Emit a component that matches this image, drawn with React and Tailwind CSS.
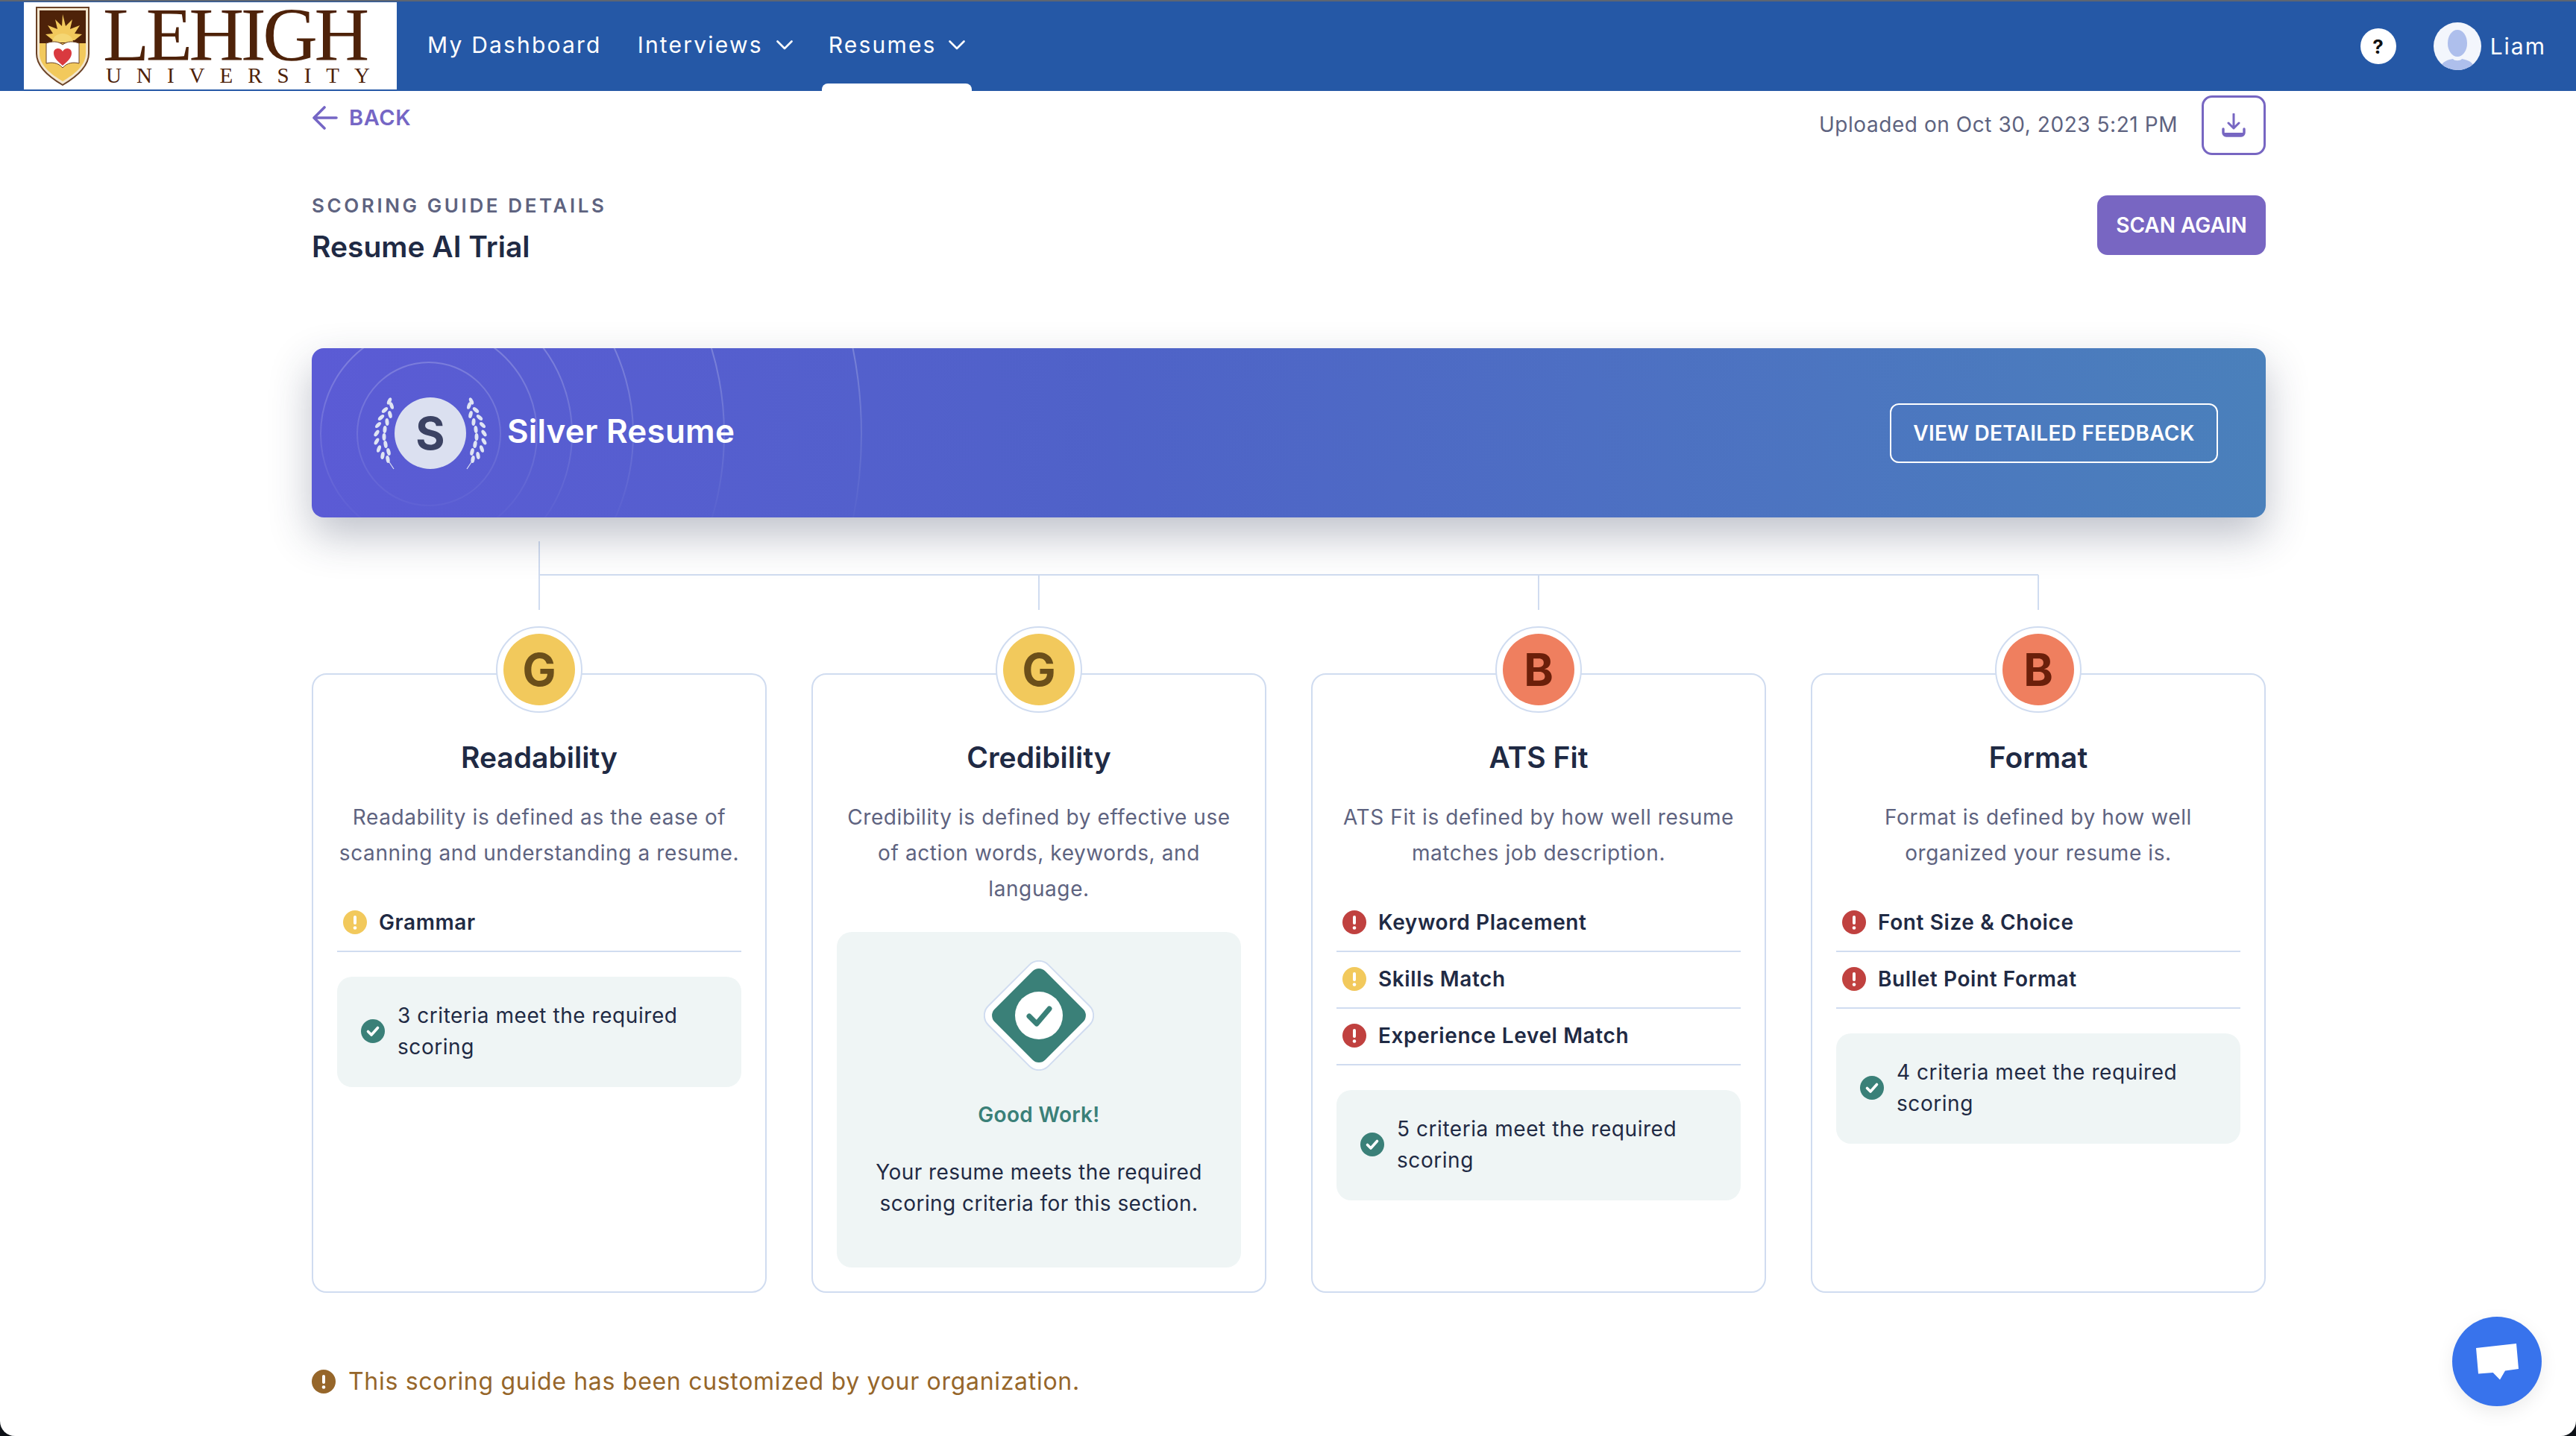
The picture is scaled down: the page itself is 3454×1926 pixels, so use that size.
const CARDS = [
  {
    grade: "G",
    title: "Readability",
    desc: ["Readability is defined as the ease of", "scanning and understanding a resume."],
    criteria: [{ label: "Grammar", level: "warn" }],
    met: 3,
  },
  {
    grade: "G",
    title: "Credibility",
    desc: ["Credibility is defined by effective use", "of action words, keywords, and", "language."],
    criteria: [],
    good: true,
  },
  {
    grade: "B",
    title: "ATS Fit",
    desc: ["ATS Fit is defined by how well resume", "matches job description."],
    criteria: [
      { label: "Keyword Placement", level: "bad" },
      { label: "Skills Match", level: "warn" },
      { label: "Experience Level Match", level: "bad" },
    ],
    met: 5,
  },
  {
    grade: "B",
    title: "Format",
    desc: ["Format is defined by how well", "organized your resume is."],
    criteria: [
      { label: "Font Size & Choice", level: "bad" },
      { label: "Bullet Point Format", level: "bad" },
    ],
    met: 4,
  },
];

function AlertDot({ color }) {
  return (
    <svg width="32" height="32" viewBox="0 0 32 32" className="shrink-0">
      <circle cx="16" cy="16" r="16" fill={color} />
      <rect x="14" y="7" width="4" height="12" rx="2" fill="#fff" />
      <circle cx="16" cy="23.5" r="2.3" fill="#fff" />
    </svg>
  );
}

function CheckDot() {
  return (
    <svg width="32" height="32" viewBox="0 0 32 32" className="shrink-0">
      <circle cx="16" cy="16" r="16" fill="#3a8078" />
      <path d="M9.500 16.500l4.500 4.500 8.500-9.500" fill="none" stroke="#fff" strokeWidth="3.600" strokeLinecap="round" strokeLinejoin="round" />
    </svg>
  );
}

function Chevron() {
  return (
    <svg width="22" height="13" viewBox="0 0 22 13" fill="none" className="shrink-0">
      <path d="M1.500 1.500L11 11l9.500-9.500" stroke="#fff" strokeWidth="2.600" strokeLinecap="round" strokeLinejoin="round" />
    </svg>
  );
}

function Crest() {
  return (
    <svg width="72" height="106" viewBox="0 0 72 106" className="shrink-0">
      <path d="M1 1h70v62c0 18-18 32-35 42C19 95 1 81 1 63z" fill="#f3e7cf" stroke="#6b4226" strokeWidth="2" />
      <path d="M5 5h62v44H5z" fill="#4e2209" />
      <path d="M5 49h62v14c0 16-16 28-31 37C21 91 5 79 5 63z" fill="#f2c95c" />
      <path d="M36 10l4 16 9-9-3 13 13-5-7 11 10 1-10 8H23L13 37l10-1-7-11 13 5-3-13 9 9z" fill="#f2c95c" />
      <path d="M22 48a14 12 0 0 1 28 0z" fill="#f5d774" />
      <path d="M14 49c8-3 16-3 22 2 6-5 14-5 22-2v27c-8-2-16-1-22 6-6-7-14-8-22-6z" fill="#fff" stroke="#6b4226" strokeWidth="1" />
      <path d="M36 79c-8-7-12-11-12-17 0-7 9-8 12-2 3-6 12-5 12 2 0 6-4 10-12 17z" fill="#d93a3f" />
    </svg>
  );
}

function Laurel({ flip }) {
  // leaf pairs running up the branch
  const leaves = [
    [20, 84, 30], [13, 79, 10], [21, 74, 35], [8, 70, 0], [17, 64, 30], [5, 60, -10], [15, 54, 20],
    [5, 49, -15], [16, 44, 15], [7, 38, -25], [19, 34, 25], [11, 28, -30], [23, 24, 35], [16, 18, -30], [25, 12, 40], [22, 6, -5],
  ];
  return (
    <svg width="30" height="98" viewBox="0 0 30 98" className={flip ? "shrink-0 -scale-x-100" : "shrink-0"}>
      <path d="M28 97L18 82" stroke="#dfe4f3" strokeWidth="1.200" fill="none" />
      {leaves.map(([x, y, r], i) => (
        <ellipse key={i} cx={x} cy={y} rx="2.500" ry="5" fill="#dfe4f3" transform={`rotate(${-r + 20} ${x} ${y})`} />
      ))}
    </svg>
  );
}

function BannerRings() {
  return (
    <svg className="absolute inset-0 w-full h-full pointer-events-none" viewBox="0 0 2620 227" fill="none">
      <defs>
        <linearGradient id="ringFade" gradientUnits="userSpaceOnUse" x1="0" y1="0" x2="0" y2="227">
          <stop offset="0" stopColor="#fff" stopOpacity="0.22" />
          <stop offset="0.6" stopColor="#fff" stopOpacity="0.1" />
          <stop offset="1" stopColor="#fff" stopOpacity="0.02" />
        </linearGradient>
      </defs>
      {[96, 145, 192, 274, 396, 580].map((r) => (
        <circle key={r} cx="157" cy="115" r={r} stroke="url(#ringFade)" strokeWidth="2" />
      ))}
    </svg>
  );
}

function GradeBadge({ grade }) {
  const good = grade === "G";
  return (
    <div className="absolute left-1/2 -translate-x-1/2 -top-[65px] w-[116px] h-[116px] rounded-full bg-white border-2 border-[#d0dcf0] flex items-center justify-center">
      <div
        className={`w-[96px] h-[96px] rounded-full flex items-center justify-center text-[60px] font-bold leading-none ${
          good ? "bg-[#f2c95c] text-[#6b4f1a]" : "bg-[#ef7f5f] text-[#6b1f0a]"
        }`}
      >
        {grade}
      </div>
    </div>
  );
}

function MetBox({ count }) {
  return (
    <div className="mt-[33px] rounded-[20px] bg-[#eff5f5] pt-[31px] pb-[33px] px-8 flex items-center gap-[17px]">
      <CheckDot />
      <p className="text-[28px] leading-[42px] tracking-[0.55px] text-[#1f2a44] pr-6">
        {`${count} criteria meet the required scoring`}
      </p>
    </div>
  );
}

function GoodWork() {
  return (
    <div className="mt-[34px] h-[450px] rounded-[20px] bg-[#eff5f5] pt-[38px] flex flex-col items-center text-center">
      <svg width="148" height="148" viewBox="0 0 148 148">
        <rect x="17" y="17" width="114" height="114" rx="18" transform="rotate(45 74 74)" fill="#fff" stroke="#d0dcf0" strokeWidth="2" />
        <rect x="26" y="26" width="96" height="96" rx="12" transform="rotate(45 74 74)" fill="#3a8078" />
        <circle cx="74" cy="74" r="32" fill="#fff" />
        <path d="M61 75l10 10 17-20" fill="none" stroke="#3a8078" strokeWidth="7" strokeLinecap="round" strokeLinejoin="round" />
      </svg>
      <p className="mt-[38px] text-[28px] leading-[42px] font-semibold tracking-[0.3px] text-[#3a8078]">Good Work!</p>
      <p className="mt-[35px] text-[28px] leading-[42px] tracking-[0.45px] text-[#1f2a44]">
        Your resume meets the required
        <br />
        scoring criteria for this section.
      </p>
    </div>
  );
}

function ScoreCard({ card }) {
  return (
    <div className="relative rounded-[20px] border-2 border-[#d0dcf0] bg-white px-[32px] pt-[87px]">
      <GradeBadge grade={card.grade} />
      <h3 className="text-center text-[39px] leading-[48px] font-semibold text-[#1f2a44]">{card.title}</h3>
      <p className="mt-[32px] text-center text-[28px] leading-[48px] tracking-[0.6px] text-[#5e6380]">
        {card.desc.map((line) => (
          <span key={line} className="block whitespace-nowrap">
            {line}
          </span>
        ))}
      </p>
      {card.criteria.length > 0 && (
        <ul className="mt-[33px]">
          {card.criteria.map((c) => (
            <li key={c.label} className="h-[76px] pb-[2px] px-2 flex items-center gap-[16px] border-b-2 border-[#d0dcf0]">
              <AlertDot color={c.level === "bad" ? "#c0413f" : "#f2c95c"} />
              <span className="text-[28px] font-semibold tracking-[0.6px] text-[#1f2a44]">{c.label}</span>
            </li>
          ))}
        </ul>
      )}
      {card.good ? <GoodWork /> : <MetBox count={card.met} />}
    </div>
  );
}

function Header() {
  return (
    <header className="h-[122px] bg-[#2558a6] border-t-2 border-[#5d6572] flex items-start pl-[32px] pr-[40px] text-white">
      <div className="w-[500px] h-[117px] mt-px bg-white flex items-center pl-[16px] gap-[18px] font-['Liberation_Serif',serif] text-[#4e2209]">
        <Crest />
        <div className="flex flex-col">
          <span className="text-[102px] leading-[78px] tracking-[-4.5px] whitespace-nowrap">LEHIGH</span>
          <span className="text-[29px] leading-[30px] tracking-[20px] ml-[4px] whitespace-nowrap">UNIVERSITY</span>
        </div>
      </div>
      <nav className="ml-[41px] h-[120px] flex items-start gap-[48px] text-[30px] tracking-[2.2px]">
        <a className="h-[116px] flex items-center">My Dashboard</a>
        <a className="h-[116px] flex items-center gap-[18px]">
          Interviews
          <Chevron />
        </a>
        <a className="relative h-[120px] pb-[4px] flex items-center gap-[16px]">
          Resumes
          <Chevron />
          <span className="absolute -left-[9px] -right-[9px] bottom-0 h-[10px] bg-white rounded-t-[8px]" />
        </a>
      </nav>
      <div className="ml-auto h-[120px] flex items-center gap-[50px]">
        <span className="w-[48px] h-[48px] rounded-full bg-white text-[#111] text-[26px] font-bold flex items-center justify-center">?</span>
        <div className="flex items-center gap-[12px]">
          <svg width="64" height="64" viewBox="0 0 64 64">
            <defs>
              <clipPath id="avatarClip">
                <circle cx="32" cy="32" r="32" />
              </clipPath>
            </defs>
            <circle cx="32" cy="32" r="32" fill="#f3f6fc" />
            <g clipPath="url(#avatarClip)" fill="#aebfec">
              <ellipse cx="32" cy="28" rx="13" ry="18" />
              <path d="M8 64c2-12 12-14 18-15 2 3 10 3 12 0 6 1 16 3 18 15z" />
            </g>
          </svg>
          <span className="text-[30px] tracking-[2px]">Liam</span>
        </div>
      </div>
    </header>
  );
}

export default function App() {
  return (
    <div className="relative h-[1926px] overflow-hidden bg-[#0d1117] font-['Inter',sans-serif]">
      <div className="relative h-full bg-white rounded-b-[20px] overflow-hidden">
        <Header />

        <main className="w-[2620px] ml-[418px] pt-[6px]">
          <div className="flex justify-between items-start h-[80px]">
            <a className="flex items-center gap-[15px] ml-[1px] mt-[8px] text-[29px] font-semibold tracking-[0.6px] text-[#7566c5]">
              <svg width="34" height="32" viewBox="0 0 34 32" fill="none" className="shrink-0">
                <path d="M32 16H3M16 2L2 16l14 14" stroke="#7566c5" strokeWidth="3.600" strokeLinecap="round" strokeLinejoin="round" />
              </svg>
              BACK
            </a>
            <div className="flex items-center gap-[32px]">
              <span className="-mt-[2px] text-[28px] tracking-[0.55px] text-[#5e6380]">Uploaded on Oct 30, 2023 5:21 PM</span>
              <button className="w-[86px] h-[80px] rounded-[14px] border-[3px] border-[#7766c2] flex items-center justify-center">
                <svg width="32" height="32" viewBox="0 0 32 32" fill="none">
                  <path d="M16 1v19M9 13l7 7 7-7" stroke="#7766c2" strokeWidth="3" strokeLinecap="round" strokeLinejoin="round" />
                  <path d="M2 21v5a4 4 0 0 0 4 4h20a4 4 0 0 0 4-4v-5" stroke="#7766c2" strokeWidth="3.400" strokeLinecap="round" />
                  <path d="M3 26h26v3H3z" fill="#7766c2" />
                </svg>
              </button>
            </div>
          </div>

          <div className="mt-[54px] flex justify-between items-start">
            <div>
              <p className="text-[26px] leading-[28px] font-semibold tracking-[3.6px] text-[#5e6380]">SCORING GUIDE DETAILS</p>
              <h1 className="mt-[17px] text-[39px] leading-[48px] font-semibold text-[#1f2a44]">Resume AI Trial</h1>
            </div>
            <button className="w-[226px] h-[80px] rounded-[14px] bg-[#7866c2] text-white text-[28px] font-semibold">SCAN AGAIN</button>
          </div>

          <section className="relative mt-[112px] h-[227px] rounded-[16px] bg-gradient-to-r from-[#5b5bd5] via-[#4f62c8] via-[41%] to-[#4a80bb] shadow-[0_24px_56px_rgba(40,50,80,0.3)] overflow-hidden flex items-center justify-between pl-[82px] pr-[64px]">
            <BannerRings />
            <div className="relative flex items-center">
              <Laurel />
              <div className="mx-[-1px] w-[96px] h-[96px] rounded-full bg-[#dbe0f0] text-[#3b4263] text-[60px] font-bold flex items-center justify-center">S</div>
              <Laurel flip />
              <span className="ml-[26px] -mt-[5px] text-[44px] font-semibold tracking-[0.2px] text-white">Silver Resume</span>
            </div>
            <button className="relative h-[80px] w-[440px] rounded-[12px] border-2 border-white text-white text-[28px] font-semibold tracking-[0.3px]">
              VIEW DETAILED FEEDBACK
            </button>
          </section>

          <svg className="mt-[32px] block" width="2620" height="92" viewBox="0 0 2620 92" fill="none" stroke="#d0dcf0" strokeWidth="2">
            <path d="M305 0v92M305 45h2010M975 45v47M1645 45v47M2315 45v47" />
          </svg>

          <div className="mt-[85px] h-[831px] grid grid-cols-4 gap-[60px]">
            {CARDS.map((card) => (
              <ScoreCard key={card.title} card={card} />
            ))}
          </div>

          <div className="mt-[95px] flex items-center gap-[17px]">
            <AlertDot color="#96662a" />
            <span className="text-[32px] leading-[48px] tracking-[0.7px] text-[#96662a]">This scoring guide has been customized by your organization.</span>
          </div>
        </main>

        <button className="absolute right-[46px] bottom-[40px] w-[120px] h-[120px] rounded-full bg-[#3873ec] shadow-[0_8px_24px_rgba(0,0,0,0.08)] flex items-center justify-center">
          <svg width="60" height="50" viewBox="0 0 60 50">
            <path d="M2 7l54-6 3 34-18 2.600-7 12-9.300-9.700L5 41.600z" fill="#fff" />
          </svg>
        </button>
      </div>
    </div>
  );
}
